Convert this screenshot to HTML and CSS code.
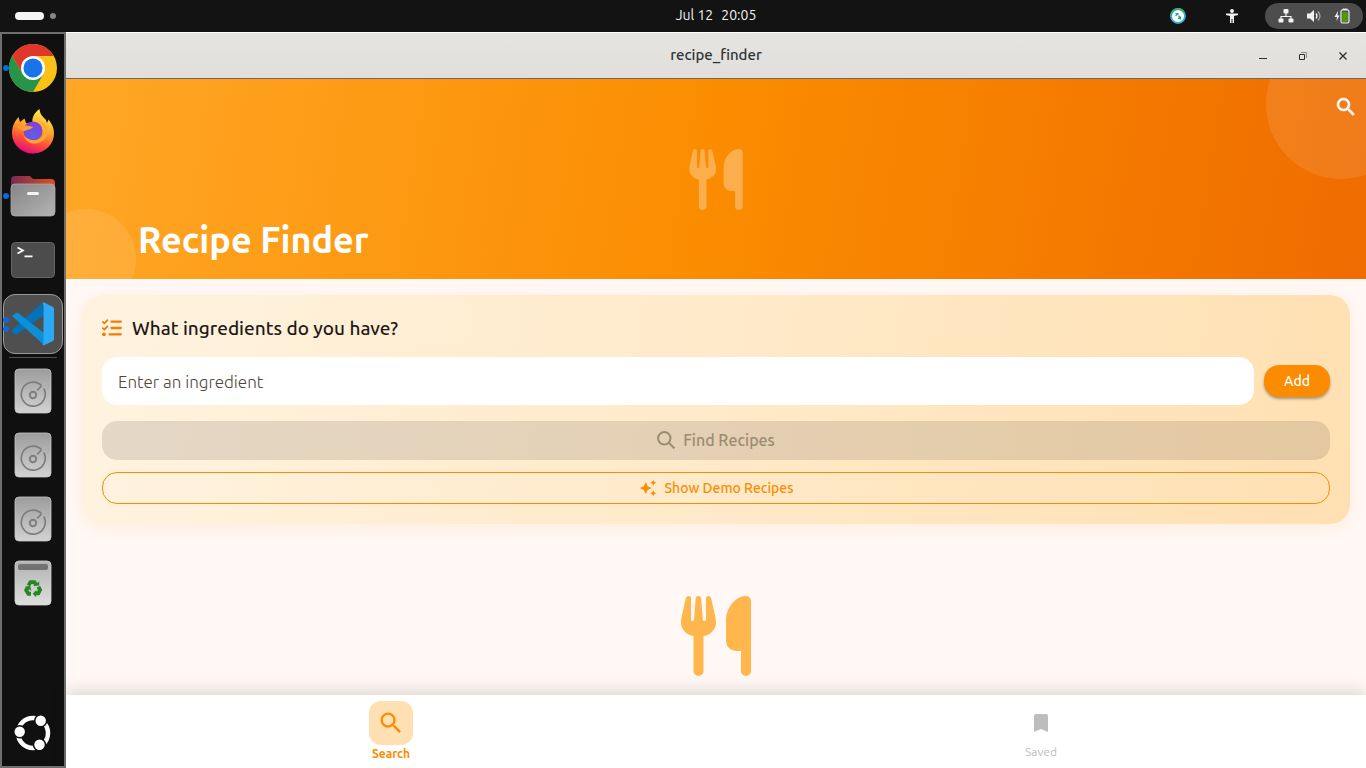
FILE: index.html
```html
<!DOCTYPE html>
<html lang="en">
<head>
<meta charset="utf-8">
<meta name="viewport" content="width=device-width, initial-scale=1">
<title>recipe_finder</title>
<link rel="stylesheet" href="styles.css">
</head>
<body>
<svg class="defs" aria-hidden="true">
  <defs>
    <linearGradient id="drive-fill" x1="0" y1="0" x2="0" y2="1"><stop offset="0" stop-color="#9c9c9c"/><stop offset="1" stop-color="#d2d2d2"/></linearGradient>
    <linearGradient id="trash-fill" x1="0" y1="0" x2="0" y2="1"><stop offset="0" stop-color="#b2b2b2"/><stop offset="1" stop-color="#dedede"/></linearGradient>
    <linearGradient id="folder-fill" x1="0" y1="0" x2="1" y2="1"><stop offset="0" stop-color="#858585"/><stop offset="1" stop-color="#b4b4b4"/></linearGradient>
    <linearGradient id="folder-back" x1="0" y1="0" x2="1" y2="0"><stop offset="0" stop-color="#762a57"/><stop offset="1" stop-color="#e0501f"/></linearGradient>
    <linearGradient id="fox-fill" x1="0.75" y1="0" x2="0.4" y2="1"><stop offset="0" stop-color="#fff14a"/><stop offset="0.45" stop-color="#ffa42a"/><stop offset="0.75" stop-color="#ff4a3c"/><stop offset="1" stop-color="#e80a80"/></linearGradient>
    <radialGradient id="globe-fill" cx="0.5" cy="0.7" r="0.7"><stop offset="0" stop-color="#5a62e8"/><stop offset="1" stop-color="#9038d8"/></radialGradient>
    <symbol id="search" viewBox="0 0 24 24"><path d="M15.5 14h-.79l-.28-.27A6.47 6.47 0 0 0 16 9.500 6.500 6.500 0 1 0 9.500 16c1.610 0 3.090-.59 4.230-1.570l.27.28v.79l5 4.990L20.490 19l-4.990-5zm-6 0C7.010 14 5 11.990 5 9.500S7.010 5 9.500 5 14 7.010 14 9.500 11.990 14 9.500 14z"/></symbol>
    <symbol id="utensils" viewBox="0 0 70 80"><path d="M4.700 2.500Q5.300 0 7.600 0Q10 0 10 2.700V23.500Q10 25 11.400 25Q12.900 25 13 23.500L14.700 2.300Q15 0 17.400 0Q19.800 0 20.100 2.300L21.900 23.500Q22 25 23.500 25Q25 25 25 23.500V2.700Q25 0 27.300 0Q29.600 0 30.200 2.500L34.600 22Q35 24 35 26.500C35 33.500 29.500 39 22.500 40V75A5 5 0 0 1 12.500 75V40C5.500 39 0 33.500 0 26.500Q0 24 .4 22Z"/><path d="M65 0A5 5 0 0 1 70 5V75A5 5 0 0 1 60 75V55H55A10 10 0 0 1 45 45V25C45 11 55 0 65 0Z"/></symbol>
    <symbol id="drive" viewBox="0 0 48 48"><rect x="6" y="2" width="36" height="44" rx="4" fill="url(#drive-fill)" stroke="#c8c8c8" stroke-width=".8"/><path d="M32.500 18.500A12 12 0 1 0 34.800 21.500M28 23.500l4.500-4.500" fill="none" stroke="#7d7d7d" stroke-width="1.700"/><circle cx="24" cy="28" r="3.200" fill="none" stroke="#7d7d7d" stroke-width="1.900"/></symbol>
  </defs>
</svg>

<div class="desktop">
  <header class="topbar">
    <button class="workspaces" aria-label="Workspaces"><span class="workspace-current"></span><span class="workspace-dot"></span></button>
    <button class="clock"><span>Jul 12</span><span>20:05</span></button>
    <div class="tray">
      <button class="tray-button" aria-label="Updates">
        <svg width="16" height="16" viewBox="0 0 16 16"><circle cx="8" cy="8" r="7" fill="#fff" stroke="#36aee2" stroke-width="1.800"/><path d="M1 8A7 7 0 0 1 14 4.500" fill="none" stroke="#34b36a" stroke-width="1.800"/><path d="M5 5L8.500 5V8L7.500 7 6 8.200 5 7.200 6 6z" fill="#2c9ade"/><path d="M11.200 11.500L7.700 11 8.800 9.800 8 9 9.500 7.500 11.200 9.200z" fill="#28a65c"/></svg>
      </button>
      <button class="tray-button" aria-label="Accessibility">
        <svg width="16" height="16" viewBox="0 0 16 16" fill="#f2f2f2"><circle cx="8" cy="3" r="2"/><path d="M2 5.500h12v1.500l-4 1v7H8.500v-4h-1v4H6V8L2 7z"/></svg>
      </button>
      <button class="system-menu" aria-label="System menu">
        <svg width="16" height="16" viewBox="0 0 16 16" fill="#f2f2f2"><rect x="5.500" y="1" width="5" height="4.500" rx="1"/><rect x="0.500" y="10.500" width="5" height="4" rx="1"/><rect x="10.500" y="10.500" width="5" height="4" rx="1"/><path d="M8 5v3M3 11V8.500h10V11" fill="none" stroke="#f2f2f2" stroke-width="1.200"/></svg>
        <svg width="16" height="16" viewBox="0 0 16 16" fill="#f2f2f2"><path d="M1 5.500h3L8 2v12l-4-3.500H1z"/><path d="M10 5.500q2 2.500 0 5" fill="none" stroke="#f2f2f2" stroke-width="1.300"/><path d="M12 3.500q4 4.500 0 9" fill="none" stroke="#a5a5a5" stroke-width="1.300"/></svg>
        <svg width="17" height="16" viewBox="0 0 17 16"><path d="M4 3L.5 9H3l-.5 4L5.500 7.500H3.500z" fill="#f2f2f2"/><rect x="7" y="2" width="8" height="13" rx="1.500" fill="none" stroke="#f2f2f2" stroke-width="1.200"/><path d="M8.500 .6h5v1.400h-5z" fill="#f2f2f2"/><rect x="8.100" y="4" width="5.800" height="10" fill="#4e9a06"/></svg>
      </button>
    </div>
  </header>

  <nav class="dock" aria-label="Dock">
    <button class="launcher running" aria-label="Chrome">
      <svg width="48" height="48" viewBox="0 0 48 48"><circle cx="24" cy="24" r="24" fill="#fbc116"/><path d="M3.200 12A24 24 0 0 1 44.800 12H24L13.600 30z" fill="#df372c"/><path d="M3.200 12A24 24 0 0 0 24 48L34.400 30H13.600z" fill="#269548"/><circle cx="24" cy="24" r="12" fill="#fff"/><circle cx="24" cy="24" r="9.500" fill="#1a73e8"/></svg>
    </button>
    <button class="launcher" aria-label="Firefox">
      <svg width="48" height="48" viewBox="0 0 48 48"><path d="M3 26C3 19 5 14 9.500 9L11 14 15.500 10.500 17 15 24 17C22 10 25 5 30.500 1C31 6 33 8 37 12L38 15 39.500 11.500C43 16 45 20 45 25A21 20 0 0 1 3 26Z" fill="url(#fox-fill)"/><circle cx="24" cy="23" r="9.500" fill="url(#globe-fill)"/><path d="M8 18.500C13 17 18 17 24 19C22 22 18 21 16 23C14 23 10 21 8 18.500Z" fill="#ff9d29"/><path d="M28 13C33 14 37 19 35 25C33 33 22 35 15 28C17 34 23 37 29 35C38 33 41 24 37 18C34 13 31 13 28 13Z" fill="#ffa92e"/></svg>
    </button>
    <button class="launcher running" aria-label="Files">
      <svg width="48" height="48" viewBox="0 0 48 48"><path d="M2 8a4 4 0 0 1 4-4h15l3 3h18a4 4 0 0 1 4 4v12H2z" fill="url(#folder-back)"/><rect x="2" y="12" width="44" height="32" rx="4" fill="url(#folder-fill)" stroke="#aaa" stroke-width=".8"/><rect x="18" y="20" width="12" height="3" rx="1.500" fill="#f5f5f5"/></svg>
    </button>
    <button class="launcher" aria-label="Terminal">
      <svg width="48" height="48" viewBox="0 0 48 48"><rect x="2.500" y="6.500" width="43" height="35" rx="4" fill="#4c4c4c" stroke="#666"/><path d="M8.500 11.500l5.500 3-5.500 3M15.500 20.300h8" fill="none" stroke="#fff" stroke-width="1.700"/></svg>
    </button>
    <button class="launcher running-two active" aria-label="Visual Studio Code">
      <svg width="48" height="48" viewBox="0 0 48 48"><path d="M33 3L3 30q-1 1 0 2l3 2.500q1 .7 2 0L35 15z" fill="#0472b8"/><path d="M3 16l4-3q1-.5 2 0L35 33v12z" fill="#0a8fd8"/><path d="M33.500 2.700q1-.4 2 .1L43.500 6.800Q45 7.500 45 9V39q0 1.500-1.500 2.300L35.500 45q-1 .4-2-.1Q34.500 44 34.500 42V6z" fill="#2aaaf5"/></svg>
    </button>
    <div class="dock-separator"></div>
    <button class="launcher" aria-label="Drive 1"><svg width="48" height="48"><use href="#drive"/></svg></button>
    <button class="launcher" aria-label="Drive 2"><svg width="48" height="48"><use href="#drive"/></svg></button>
    <button class="launcher" aria-label="Drive 3"><svg width="48" height="48"><use href="#drive"/></svg></button>
    <button class="launcher" aria-label="Trash">
      <svg width="48" height="48" viewBox="0 0 48 48"><rect x="6" y="2" width="36" height="44" rx="4" fill="url(#trash-fill)" stroke="#d5d5d5" stroke-width=".8"/><rect x="9" y="5" width="30" height="6" rx="2" fill="#727272"/><g transform="translate(3.500 3.300) scale(.86)"><g fill="none" stroke="#26861f" stroke-width="4.500"><path d="M18.500 27l2.500-4h4.500l2 3.500"/><path d="M30 28.500l2 3.500-2 4h-4"/><path d="M21.500 36.500h-3l-2.500-4 1.500-3"/></g><g fill="#26861f"><path d="M24.500 27.500l6.500-.5v-5z"/><path d="M27.500 32.500v8L23.500 36.500z"/><path d="M14.500 28l6-.5 1.500 5.500z"/></g></g></svg>
    </button>
    <button class="launcher apps" aria-label="Show apps">
      <svg width="48" height="48" viewBox="0 0 48 48"><circle cx="24" cy="24" r="15" fill="none" stroke="#fff" stroke-width="4.500"/><g fill="#fff" stroke="#111" stroke-width="1.600"><circle cx="10.700" cy="22.700" r="6"/><circle cx="31.700" cy="11.700" r="6"/><circle cx="30.500" cy="35.800" r="6"/></g></svg>
    </button>
  </nav>

  <section class="window">
    <div class="titlebar">
      <h1 class="window-title">recipe_finder</h1>
      <div class="window-controls">
        <button class="window-button" aria-label="Minimize"><svg width="10" height="10" viewBox="0 0 10 10"><path d="M1 7.500h8" stroke="#2d2d2d"/></svg></button>
        <button class="window-button" aria-label="Restore"><svg width="10" height="10" viewBox="0 0 10 10" fill="none"><path d="M1.500 3.500h5v5h-5z" stroke="#2d2d2d"/><path d="M3 1.500h5.500V7" stroke="#8a8a8a"/></svg></button>
        <button class="window-button" aria-label="Close"><svg width="10" height="10" viewBox="0 0 10 10"><path d="M1.500 1.500l7 7M8.500 1.500l-7 7" stroke="#2d2d2d" stroke-width="1.300"/></svg></button>
      </div>
    </div>

    <main class="app">
      <header class="hero">
        <svg class="hero-utensils" aria-hidden="true"><use href="#utensils"/></svg>
        <h2 class="hero-title">Recipe Finder</h2>
        <button class="hero-search" aria-label="Search"><svg width="24" height="24"><use href="#search"/></svg></button>
      </header>

      <form class="card">
        <label class="card-heading" for="ingredient">
          <svg class="list-icon" width="20" height="18" viewBox="0 0 20 18" fill="none" stroke="#f57c00" stroke-linecap="round" stroke-linejoin="round" aria-hidden="true"><path d="M9.500 2.700h9.300M9.500 9h9.300M7.500 15.300h11.300" stroke-width="2.300"/><path d="M.9 2.900l1.500 1.500 3-3.300M.9 9.200l1.500 1.500 3-3.300" stroke-width="1.800"/><circle cx="1.900" cy="15.300" r="1.900" fill="#f57c00" stroke="none"/></svg>
          What ingredients do you have?
        </label>
        <div class="entry">
          <input class="entry-input" id="ingredient" type="text" placeholder="Enter an ingredient">
          <button class="add" type="button">Add</button>
        </div>
        <button class="find" type="button" disabled><svg width="18" height="18" viewBox="0 0 18 18" fill="none" stroke="#9c8b73" stroke-width="2" aria-hidden="true"><circle cx="7.300" cy="7.300" r="6.200"/><path d="M11.800 11.800l5.500 5.500"/></svg>Find Recipes</button>
        <button class="demo" type="button"><svg width="18" height="18" viewBox="0 0 24 24" aria-hidden="true"><path d="M19 9l1.250-2.750L23 5l-2.750-1.250L19 1l-1.250 2.750L15 5l2.750 1.250L19 9zM11.500 9.500L9 4 6.500 9.500 1 12l5.500 2.500L9 20l2.500-5.500L17 12l-5.500-2.500zM19 15l-1.250 2.750L15 19l2.750 1.250L19 23l1.250-2.750L23 19l-2.750-1.250L19 15z"/></svg>Show Demo Recipes</button>
      </form>

      <svg class="empty-utensils" aria-hidden="true"><use href="#utensils"/></svg>
    </main>

    <nav class="tabs" aria-label="Main">
      <button class="tab tab-current"><span class="tab-pill"><svg width="28" height="28"><use href="#search"/></svg></span>Search</button>
      <button class="tab"><span class="tab-icon"><svg width="24" height="24" viewBox="0 0 24 24"><path d="M17 3H7c-1.100 0-1.990.9-1.990 2L5 21l7-3 7 3V5c0-1.100-.9-2-2-2z"/></svg></span>Saved</button>
    </nav>
  </section>
</div>
</body>
</html>
```
FILE: styles.css
```css
* { box-sizing: border-box; }
html, body { height: 100%; }
body {
  margin: 0;
  font-family: Ubuntu, "Noto Sans", sans-serif;
  font-size: 14px;
  line-height: 20px;
}
button {
  margin: 0;
  padding: 0;
  border: 0;
  background: none;
  font: inherit;
  color: inherit;
}
svg { display: block; flex: none; }
.defs { position: absolute; width: 0; height: 0; }

.desktop {
  display: grid;
  grid-template: 32px minmax(0, 1fr) / 66px minmax(0, 1fr);
  height: 100vh;
  overflow: hidden;
}

/* Top bar */
.topbar {
  grid-column: 1 / -1;
  display: grid;
  grid-template-columns: 1fr auto 1fr;
  align-items: center;
  padding: 0 3px 0 15px;
  background: #131313;
  color: #f2f2f2;
}
.workspaces { display: flex; align-items: center; gap: 6px; justify-self: start; }
.workspace-current { width: 29px; height: 8px; border-radius: 4px; background: #f4f4f4; }
.workspace-dot { width: 6px; height: 6px; border-radius: 50%; background: #858585; }
.clock { display: flex; gap: 8px; margin-left: 54px; padding-bottom: 2px; }
.tray { display: flex; align-items: center; justify-self: end; }
.tray-button { margin-right: 38px; }
.tray-button + .tray-button { margin-right: 25px; }
.system-menu {
  display: flex;
  align-items: center;
  gap: 12px;
  height: 26px;
  padding: 0 12px 0 13px;
  border-radius: 13px;
  background: #4d4d4d;
}

/* Dock */
.dock {
  display: flex;
  flex-direction: column;
  align-items: center;
  padding: 2px 0 1px;
  border: 2px solid #6f6f6f;
  background: #101010;
}
.launcher {
  position: relative;
  display: grid;
  place-items: center;
  flex: none;
  width: 60px;
  height: 60px;
  margin: 2px 0;
  border: 1px solid transparent;
  border-radius: 12px;
}
.active { border-color: #999; background: #4f4f4f; }
.running::before, .running-two::before, .running-two::after {
  content: "";
  position: absolute;
  left: -1px;
  top: 26px;
  width: 6px;
  height: 6px;
  border-radius: 50%;
  background: #0a6cd6;
}
.running-two::before { top: 22px; }
.running-two::after { top: 31px; }
.dock-separator { width: 48px; height: 1px; margin: 1px 0; flex: none; background: #505050; }
.apps { margin-top: auto; }

/* Window */
.window { display: flex; flex-direction: column; min-height: 0; background: #fff8f5; }
.titlebar {
  position: relative;
  display: flex;
  align-items: center;
  justify-content: center;
  height: 47px;
  flex: none;
  border-top: 1px solid #fff;
  border-bottom: 1px solid #6c6865;
  background: linear-gradient(#e6e5e1, #e1dedb);
}
.window-title { margin: 0; padding-bottom: 2px; font-size: 15px; font-weight: 500; color: #2d3436; }
.window-controls { position: absolute; right: 8px; display: flex; gap: 10px; }
.window-button { display: grid; place-items: center; width: 30px; height: 30px; }

.app {
  display: flex;
  flex-direction: column;
  flex: 1;
  min-height: 0;
  overflow: hidden;
}
.hero {
  position: relative;
  flex: none;
  height: 200px;
  overflow: hidden;
  background: linear-gradient(99deg, #ffa726, #fb8c00 50%, #ef6c00);
}
.hero::before, .hero::after {
  content: "";
  position: absolute;
  border-radius: 50%;
  background: rgba(255, 255, 255, 0.1);
}
.hero::before { top: -50px; right: -50px; width: 150px; height: 150px; }
.hero::after { bottom: -30px; left: -30px; width: 100px; height: 100px; }
.hero-utensils { width: 54px; height: 61px; margin: 70px auto 0; fill: rgba(255, 255, 255, 0.3); }
.hero-title {
  margin: 6px 0 0 72px;
  font-size: 36px;
  line-height: 48px;
  font-weight: 700;
  color: #fff;
}
.hero-search { position: absolute; top: 16px; right: 8px; fill: #fff; stroke: #fff; stroke-width: 0.6px; }

.card {
  display: flex;
  flex-direction: column;
  flex: none;
  margin: 16px;
  padding: 20px;
  border-radius: 20px;
  background: linear-gradient(100deg, #fff3e0, #ffe0b2);
  box-shadow: 0 4px 15px rgba(255, 152, 0, 0.1);
}
.card-heading {
  display: flex;
  align-items: center;
  gap: 10px;
  margin-bottom: 16px;
  font-size: 19px;
  line-height: 26px;
  font-weight: 500;
  color: #1f1b16;
}
.entry { display: flex; align-items: center; gap: 10px; margin-bottom: 16px; }
.entry-input {
  flex: 1;
  min-width: 0;
  height: 48px;
  padding: 0 16px;
  border: 0;
  border-radius: 15px;
  background: #fff;
  font: 300 17px/24px Ubuntu, "Noto Sans", sans-serif;
}
.entry-input::placeholder { color: #51453a; opacity: 1; }
.add {
  min-width: 66px;
  height: 32px;
  border-radius: 15px;
  background: #fb8c00;
  box-shadow: 0 2px 3px rgba(0, 0, 0, 0.35);
  font-weight: 500;
  color: #fff;
}
.find, .demo { display: flex; align-items: center; justify-content: center; gap: 8px; }
.find {
  height: 39px;
  margin-bottom: 12px;
  padding-bottom: 1px;
  border-radius: 15px;
  background: rgba(31, 27, 22, 0.12);
  font-size: 16px;
  font-weight: 500;
  color: #9c8b73;
}
.demo {
  height: 32px;
  border: 1px solid #fb8c00;
  border-radius: 15px;
  font-weight: 500;
  color: #fb8c00;
  fill: #fb8c00;
}
.empty-utensils { flex: none; align-self: center; width: 70px; height: 80px; margin-top: 56px; fill: #ffb74d; }

/* Bottom tabs */
.tabs {
  position: relative;
  display: flex;
  flex: none;
  height: 73px;
  padding-top: 6px;
  background: #fff;
  box-shadow: 0 -4px 16px rgba(0, 0, 0, 0.14);
}
.tab {
  display: flex;
  flex: 1;
  flex-direction: column;
  align-items: center;
  font-size: 12px;
  line-height: 14px;
  color: #bdbdbd;
  fill: #bdbdbd;
}
.tab-current { line-height: 18px; font-weight: 600; color: #fb8c00; fill: #fb8c00; }
.tab-pill, .tab-icon { display: grid; place-items: center; height: 44px; }
.tab-pill { width: 44px; border-radius: 12px; background: #ffe0b2; }
```
